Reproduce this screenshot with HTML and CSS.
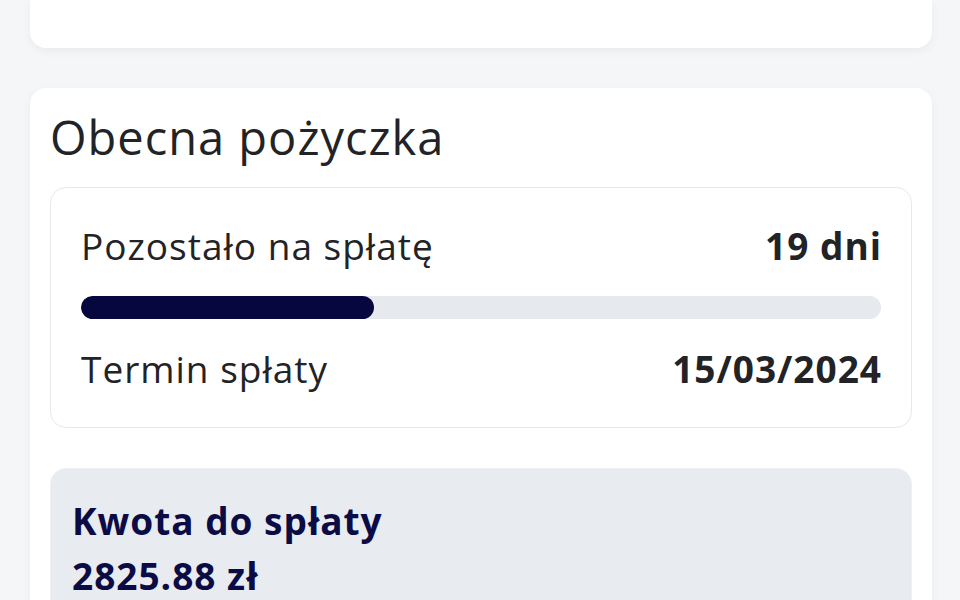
FILE: index.html
```html
<!DOCTYPE html>
<html lang="pl">
  <head>
    <meta charset="UTF-8" />
    <meta name="viewport" content="width=device-width, initial-scale=1.0" />
    <title>Obecna pożyczka</title>
    <link rel="stylesheet" href="styles.css">
  </head>
  <body>
    <div class="page">
      <div class="card card-prev"></div>

      <div class="card loan">
        <h2 class="loan-title">Obecna pożyczka</h2>

        <div class="loan-status">
          <div class="row">
            <span class="label">Pozostało na spłatę</span>
            <span class="value">19 dni</span>
          </div>
          <div class="progress">
            <div class="progress-fill" style="width: 36.6%"></div>
          </div>
          <div class="row">
            <span class="label">Termin spłaty</span>
            <span class="value">15/03/2024</span>
          </div>
        </div>

        <div class="amount-box">
          <div class="amount-label">Kwota do spłaty</div>
          <div class="amount-value">2825.88 zł</div>
        </div>
      </div>
    </div>
  </body>
</html>
```

FILE: styles.css
```css
html,
body {
  margin: 0;
  padding: 0;
  height: 100%;
  overflow: hidden;
}
body {
  font-family: "Open Sans", "Noto Sans", sans-serif;
  background-color: #f5f6f8;
  color: #222326;
  letter-spacing: 1px;
}
.page {
  padding: 0 28px 0 30px;
}
.card {
  background-color: #fff;
  border-radius: 16px;
  box-shadow: 0 3px 10px rgba(0, 0, 0, 0.05);
}
.card-prev {
  height: 48px;
  border-radius: 0 0 16px 16px;
}
.loan {
  margin-top: 40px;
  padding: 20px 20px 40px;
}
.loan-title {
  margin: 1px 0 22px;
  font-size: 47px;
  line-height: 56px;
  font-weight: 400;
  color: #222326;
}
.loan-status {
  border: 1px solid #e6e8eb;
  border-radius: 16px;
  padding: 34px 30px;
}
.row {
  display: flex;
  justify-content: space-between;
  align-items: baseline;
  font-size: 37px;
  line-height: 48px;
}
.value {
  font-weight: 700;
  margin-right: -1px;
}
.progress {
  height: 23px;
  margin: 26px 0;
  background-color: #e6e9ed;
  border-radius: 12px;
  overflow: hidden;
}
.progress-fill {
  height: 100%;
  background-color: #07073f;
  border-radius: 12px;
}
.amount-box {
  margin-top: 40px;
  padding: 24px 21px 30px;
  background-color: #e8ebef;
  border: 1px solid #eef0f3;
  border-radius: 16px;
  color: #0b0b45;
  font-size: 37px;
  line-height: 55px;
  font-weight: 700;
}
```
